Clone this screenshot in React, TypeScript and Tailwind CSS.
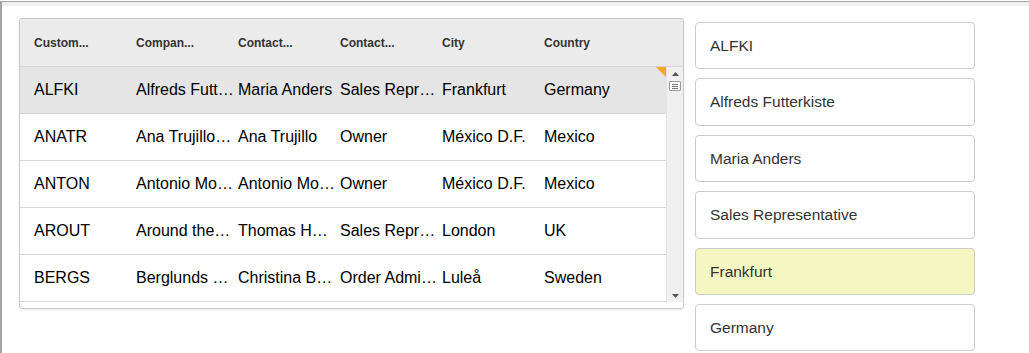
import React from 'react';

const columns = ['Custom...', 'Compan...', 'Contact...', 'Contact...', 'City', 'Country'];

const rows = [
  ['ALFKI', 'Alfreds Futterkiste', 'Maria Anders', 'Sales Representative', 'Frankfurt', 'Germany'],
  ['ANATR', 'Ana Trujillo Emparedados y helados', 'Ana Trujillo', 'Owner', 'México D.F.', 'Mexico'],
  ['ANTON', 'Antonio Moreno Taquería', 'Antonio Moreno', 'Owner', 'México D.F.', 'Mexico'],
  ['AROUT', 'Around the Horn', 'Thomas Hardy', 'Sales Representative', 'London', 'UK'],
  ['BERGS', 'Berglunds snabbköp', 'Christina Berglund', 'Order Administrator', 'Luleå', 'Sweden'],
];

const fields = ['ALFKI', 'Alfreds Futterkiste', 'Maria Anders', 'Sales Representative', 'Frankfurt', 'Germany'];

const App = () => {
  return (
    <div className="w-[1029px] h-[353px] overflow-hidden bg-white font-['Liberation_Sans',Arial,sans-serif]">
      <div className="h-full mt-px border-t border-l-2 border-[#a4a4a4]">
        <div className="h-[4px] bg-[#f0f0f0]" />

        <div className="flex items-start pl-[17px] pt-[12px]">
          {/* grid */}
          <div className="w-[665px] h-[291px] border border-[#c8c8c8] rounded-[3px] overflow-hidden shadow-[0_1px_2px_rgba(0,0,0,0.08)]">
            <div className="flex h-[48px] bg-[#ebebeb] border-b border-[#d6d6d6] text-[12px] font-bold text-[#333] pl-[11px]">
              {columns.map((c, i) => (
                <div key={i} className="w-[102px] shrink-0 pl-[3px] flex items-center">
                  {c}
                </div>
              ))}
            </div>
            <div className="flex h-[241px]">
              <div className="w-[646px] text-[16px] text-black">
                {rows.map((r, ri) => (
                  <div
                    key={ri}
                    className={
                      ri === 0
                        ? 'relative flex h-[47px] items-center border-b border-[#d6d6d6] bg-[#e5e5e5] pl-[11px]'
                        : 'relative flex h-[47px] items-center border-b border-[#d6d6d6] pl-[11px]'
                    }
                  >
                    {r.map((v, ci) => (
                      <div key={ci} className="w-[102px] shrink-0 pl-[3px] pr-[1px] whitespace-nowrap overflow-hidden text-ellipsis">
                        {v}
                      </div>
                    ))}
                    {ri === 0 && (
                      <div className="absolute right-0 top-0 w-0 h-0 border-t-[10px] border-l-[10px] border-t-[#f5a623] border-l-transparent" />
                    )}
                  </div>
                ))}
              </div>
              {/* scrollbar */}
              <div className="w-[17px] h-[235px] bg-[#f0f0f0] border-l border-[#e2e2e2] flex flex-col items-center">
                <svg width="9" height="6" viewBox="0 0 9 6" className="mt-[4px]">
                  <path d="M4.5 1 L8 5 L1 5 Z" fill="#555" />
                </svg>
                <div className="mt-[4px] w-[12px] h-[10px] border border-[#9a9a9a] rounded-[1px] bg-[#f8f8f8] flex flex-col justify-center gap-[1px] px-[2px]">
                  <div className="h-px bg-[#777]" />
                  <div className="h-px bg-[#777]" />
                  <div className="h-px bg-[#777]" />
                </div>
                <div className="flex-1" />
                <svg width="9" height="6" viewBox="0 0 9 6" className="mb-[3px]">
                  <path d="M1 1 L8 1 L4.5 5 Z" fill="#555" />
                </svg>
              </div>
            </div>
          </div>

          {/* inputs */}
          <div className="ml-[11px] mt-[4px] flex flex-col gap-[9px]">
            {fields.map((f, i) => (
              <div
                key={i}
                className={
                  i === 4
                    ? 'w-[280px] h-[47.4px] border border-[#cccccc] rounded-[4px] bg-[#f5f7c2] pl-[14px] flex items-center text-[15.5px] text-[#333]'
                    : 'w-[280px] h-[47.4px] border border-[#cccccc] rounded-[4px] bg-white pl-[14px] flex items-center text-[15.5px] text-[#333]'
                }
              >
                {f}
              </div>
            ))}
          </div>
        </div>
      </div>
    </div>
  );
};

export default App;
